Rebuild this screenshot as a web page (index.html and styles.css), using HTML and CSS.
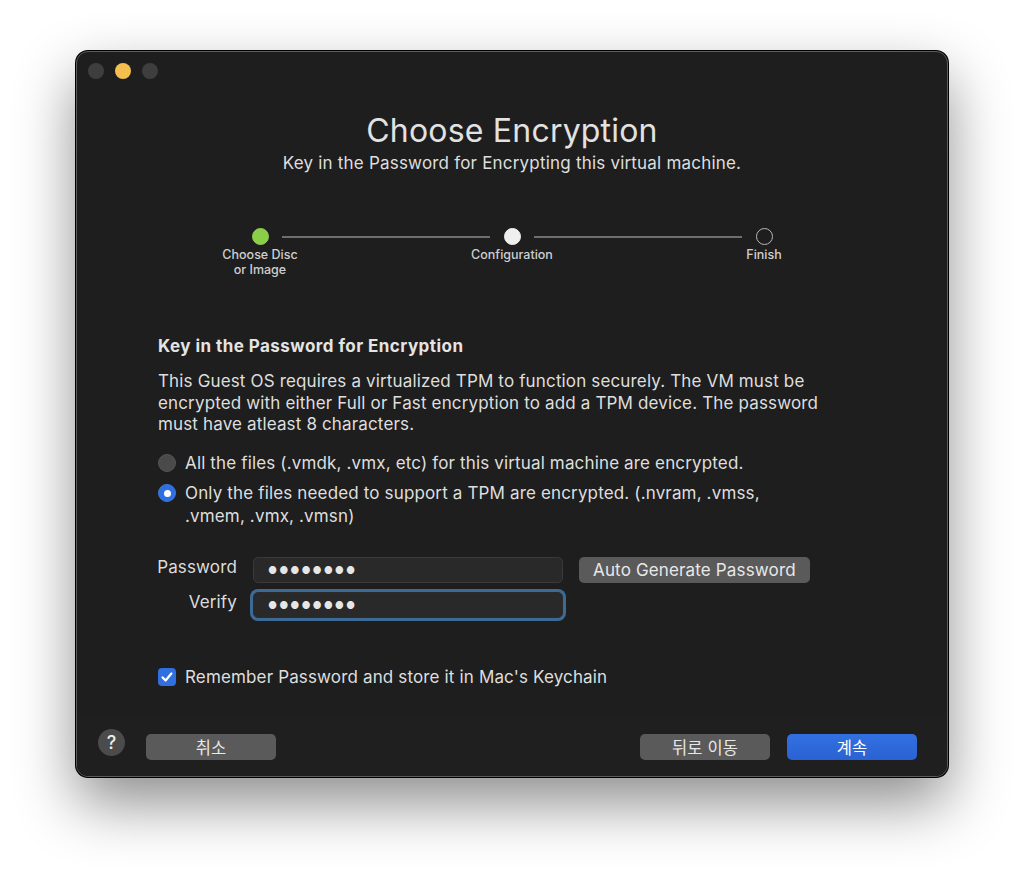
FILE: index.html
```html
<!DOCTYPE html>
<html lang="ko">
<head>
    <meta charset="UTF-8">
    <meta name="viewport" content="width=device-width, initial-scale=1.0">
    <title>Choose Encryption</title>
    <link rel="stylesheet" href="styles.css">
</head>
<body>
    <div class="window">
        <div class="titlebar">
            <span class="light"></span>
            <span class="light yellow"></span>
            <span class="light"></span>
        </div>

        <h1 class="title">Choose Encryption</h1>
        <p class="subtitle">Key in the Password for Encrypting this virtual machine.</p>

        <!-- wizard steps -->
        <div class="stepper">
            <div class="step">
                <span class="dot done"></span>
                <span class="step-label">Choose Disc<br>or Image</span>
            </div>
            <div class="step-line"></div>
            <div class="step">
                <span class="dot current"></span>
                <span class="step-label">Configuration</span>
            </div>
            <div class="step-line"></div>
            <div class="step">
                <span class="dot"></span>
                <span class="step-label">Finish</span>
            </div>
        </div>

        <div class="content">
            <h2 class="heading">Key in the Password for Encryption</h2>
            <p class="desc">This Guest OS requires a virtualized TPM to function securely. The VM must be encrypted with either Full or Fast encryption to add a TPM device. The password must have atleast 8 characters.</p>

            <div class="radio-row first">
                <span class="radio"></span>
                <span>All the files (.vmdk, .vmx, etc) for this virtual machine are encrypted.</span>
            </div>
            <div class="radio-row">
                <span class="radio checked"></span>
                <span>Only the files needed to support a TPM are encrypted. (.nvram, .vmss,<br>.vmem, .vmx, .vmsn)</span>
            </div>

            <div class="form">
                <label class="field-label">Password</label>
                <div class="field">&#9679;&#9679;&#9679;&#9679;&#9679;&#9679;&#9679;&#9679;</div>
                <button class="btn">Auto Generate Password</button>

                <label class="field-label">Verify</label>
                <div class="field focused">&#9679;&#9679;&#9679;&#9679;&#9679;&#9679;&#9679;&#9679;</div>
                <span></span>
            </div>

            <div class="check-row">
                <span class="checkbox">
                    <svg viewBox="0 0 18 18" width="18" height="18"><path d="M4.6 9.4l3 3.1 5.8-7" fill="none" stroke="#fff" stroke-width="2.2" stroke-linecap="round" stroke-linejoin="round"/></svg>
                </span>
                <span>Remember Password and store it in Mac's Keychain</span>
            </div>
        </div>

        <div class="footer">
            <span class="help">?</span>
            <button class="btn wide">취소</button>
            <span class="spacer"></span>
            <button class="btn wide">뒤로 이동</button>
            <button class="btn wide primary">계속</button>
        </div>
    </div>
</body>
</html>
```

FILE: styles.css
```css
html, body {
    height: 100%;
}
body {
    margin: 0;
    padding-top: 51px;
    box-sizing: border-box;
    background: #ffffff;
    font-family: "Inter", "Noto Sans CJK KR", sans-serif;
    color: #dedede;
}
/* the dark dialog window */
.window {
    box-sizing: border-box;
    width: 872px;
    height: 726px;
    margin-left: 76px;
    background: #1e1e1e;
    border: 1px solid #5c5c5c;
    border-radius: 12px;
    box-shadow: 0 26px 60px rgba(0, 0, 0, 0.45), 0 0 0 1px #000;
    display: flex;
    flex-direction: column;
    overflow: hidden;
}
.titlebar {
    display: flex;
    gap: 11px;
    padding: 11px 0 0 11px;
    height: 29px;
}
.light {
    width: 16px;
    height: 16px;
    border-radius: 50%;
    background: #3e3e3e;
}
.light.yellow {
    background: #f4bf4f;
}
.title {
    margin: 20px 0 0;
    text-align: center;
    font-size: 32px;
    line-height: 38px;
    font-weight: 400;
    letter-spacing: 0.2px;
    color: #e2e2e2;
}
.subtitle {
    margin: 3px 0 0;
    text-align: center;
    font-size: 17px;
    line-height: 20px;
    letter-spacing: 0.2px;
    color: #dedede;
}
/* steps */
.stepper {
    display: flex;
    justify-content: center;
    margin-top: 55px;
}
.step {
    width: 120px;
    display: flex;
    flex-direction: column;
    align-items: center;
}
.dot {
    box-sizing: border-box;
    width: 17px;
    height: 17px;
    border-radius: 50%;
    border: 1.5px solid #b8b8b8;
}
.dot.done {
    background: #8bcf49;
    border-color: #8bcf49;
}
.dot.current {
    background: #efefef;
    border-color: #efefef;
}
.step-label {
    margin-top: 2px;
    font-size: 12.5px;
    line-height: 15px;
    font-weight: 500;
    text-align: center;
    color: #cfcfcf;
}
.step-line {
    width: 208px;
    height: 1.5px;
    margin: 8px -38px 0;
    background: #6e6e6e;
}
/* main form area */
.content {
    padding-left: 81px;
    font-size: 17px;
    line-height: 22.5px;
    letter-spacing: 0.15px;
}
.heading {
    margin: 59px 0 0;
    font-size: 17px;
    line-height: 20px;
    font-weight: 700;
    letter-spacing: 0.45px;
    color: #e4e4e4;
}
.desc {
    margin: 15px 0 0;
    width: 672px;
    line-height: 21.5px;
}
.radio-row {
    display: flex;
    align-items: flex-start;
    gap: 9px;
    margin-top: 8px;
}
.radio-row.first {
    margin-top: 16px;
}
.radio {
    flex: none;
    box-sizing: border-box;
    width: 18px;
    height: 18px;
    margin-top: 2px;
    border-radius: 50%;
    background: #4a4a4a;
    border: 1px solid #555;
}
.radio.checked {
    background: #2f6fdf;
    border-color: #3a78e6;
    display: flex;
    align-items: center;
    justify-content: center;
}
.radio.checked::after {
    content: "";
    width: 7px;
    height: 7px;
    border-radius: 50%;
    background: #fff;
}
.form {
    display: grid;
    grid-template-columns: 79px 310px auto;
    column-gap: 16px;
    row-gap: 9px;
    align-items: center;
    justify-items: start;
    margin-top: 30px;
}
.field-label {
    justify-self: end;
    margin-top: -6px;
    color: #dcdcdc;
}
.field {
    box-sizing: border-box;
    width: 310px;
    height: 26px;
    padding: 0 14px;
    background: #292929;
    border: 1px solid #3a3a3a;
    border-radius: 5px;
    font-size: 10px;
    line-height: 24px;
    letter-spacing: 2px;
    color: #e6e6e6;
}
.field.focused {
    box-shadow: 0 0 0 3px #3d6a95;
    border-color: #2b2b2b;
}
.btn {
    font-family: inherit;
    font-size: 17px;
    letter-spacing: 0.15px;
    color: #e8e8e8;
    background: #5a5a5a;
    border: none;
    border-radius: 5px;
    height: 26px;
    padding: 0 14px;
}
.check-row {
    display: flex;
    align-items: center;
    gap: 9px;
    margin-top: 48px;
}
.checkbox {
    width: 18px;
    height: 18px;
    border-radius: 4px;
    background: #2f6fdf;
    display: flex;
}
/* bottom button bar */
.footer {
    margin-top: auto;
    display: flex;
    align-items: flex-end;
    padding: 0 30px 16px 21px;
    height: 58px;
    box-sizing: border-box;
    border-top: 1px solid #202020;
    background: #1f1f1f;
}
.help {
    width: 27px;
    height: 27px;
    border-radius: 50%;
    background: #4b4b4b;
    color: #eee;
    font-size: 18px;
    font-weight: 500;
    text-align: center;
    line-height: 27px;
    margin: 0 21px 4px 0;
}
.btn.wide {
    width: 130px;
    font-size: 16.5px;
}
.spacer {
    flex: 1;
}
.btn.primary {
    margin-left: 17px;
    background: linear-gradient(#3270e2, #2a62d2);
    color: #fff;
}
```
